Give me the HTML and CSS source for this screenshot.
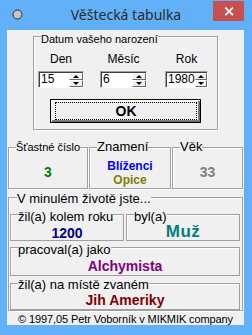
FILE: index.html
```html
<!DOCTYPE html>
<html lang="cs">
<head>
<meta charset="utf-8">
<title>Věštecká tabulka</title>
<link rel="stylesheet" href="styles.css">
</head>
<body>
<div class="window">
  <div class="titlebar">
    <div class="tb-left">
      <svg class="app-icon" width="11" height="11" viewBox="0 0 11 11"><circle cx="5.5" cy="5.5" r="4.5" fill="#c4c4c4" stroke="#2e2e2e" stroke-width="1"/></svg>
    </div>
    <div class="title">Věštecká tabulka</div>
    <div class="tb-right">
      <div class="close"><svg width="31" height="20" viewBox="0 0 31 20"><path d="M13 7.2 L19.3 13.5 M19.3 7.2 L13 13.5" stroke="#fff" stroke-width="1.8" stroke-linecap="square"/></svg></div>
    </div>
  </div>
  <div class="client">
    <div class="group date">
      <div class="cap cap-small">Datum vašeho narození</div>
      <div class="date-row">
        <div class="field f1">
          <div class="flabel">Den</div>
          <div class="spin"><span class="spin-text">15</span><span class="spin-btns"><span class="sb up"></span><span class="sb down"></span></span></div>
        </div>
        <div class="field f2">
          <div class="flabel">Měsíc</div>
          <div class="spin"><span class="spin-text">6</span><span class="spin-btns"><span class="sb up"></span><span class="sb down"></span></span></div>
        </div>
        <div class="field f3">
          <div class="flabel">Rok</div>
          <div class="spin"><span class="spin-text">1980</span><span class="spin-btns"><span class="sb up"></span><span class="sb down"></span></span></div>
        </div>
      </div>
      <div class="ok-btn"><span class="ok-focus">OK</span></div>
    </div>

    <div class="row3">
      <div class="group rbox r-lucky">
        <div class="cap cap-small">Šťastné číslo</div>
        <div class="val big green">3</div>
      </div>
      <div class="group rbox r-sign">
        <div class="cap">Znamení</div>
        <div class="val mid blue first">Blíženci</div>
        <div class="val mid olive">Opice</div>
      </div>
      <div class="group rbox r-age">
        <div class="cap">Věk</div>
        <div class="val big gray">33</div>
      </div>
    </div>

    <div class="group past">
      <div class="cap cap-past">V minulém životě jste...</div>
      <div class="irow">
        <div class="group ibox half">
          <div class="cap cap-inner">žil(a) kolem roku</div>
          <div class="val big navy pad1">1200</div>
        </div>
        <div class="group ibox half">
          <div class="cap cap-inner">byl(a)</div>
          <div class="val big teal wide">Muž</div>
        </div>
      </div>
      <div class="group ibox job">
        <div class="cap cap-inner">pracoval(a) jako</div>
        <div class="val big purple pad1">Alchymista</div>
      </div>
      <div class="group ibox place">
        <div class="cap cap-place">žil(a) na místě zvaném</div>
        <div class="val big maroon">Jih Ameriky</div>
      </div>
    </div>

    <div class="copyright">© 1997,05 Petr Voborník v MIKMIK company</div>
  </div>
</div>
</body>
</html>
```

FILE: styles.css
```css
html, body {
  margin: 0;
  padding: 0;
}
body {
  width: 252px;
  height: 335px;
  overflow: hidden;
  background: #62b0f7;
  font-family: "Liberation Sans", Arial, sans-serif;
  color: #000;
}
.window {
  width: 252px;
  height: 335px;
  background: #62b0f7;
}

/* title bar */
.titlebar {
  height: 30px;
  display: grid;
  grid-template-columns: 1fr auto 1fr;
}
.tb-left {
  display: flex;
  align-items: flex-start;
  padding: 9px 0 0 12px;
}
.app-icon { display: block; }
.title {
  font-family: "Noto Sans", "Liberation Sans", sans-serif;
  font-size: 14px;
  line-height: 30px;
  color: #2b2b2b;
  white-space: nowrap;
}
.tb-right {
  display: flex;
  justify-content: flex-end;
  align-items: flex-start;
  padding: 1px 8px 0 0;
}
.close {
  width: 31px;
  height: 20px;
  background: #c75050;
}
.close svg { display: block; }

/* client area */
.client {
  margin-left: 7px;
  width: 237px;
  height: 295px;
  box-sizing: border-box;
  padding-top: 6px;
  background: #f0f0f0;
}

.group {
  border: 1px solid #a0a0a0;
  box-sizing: border-box;
  box-shadow: inset 1px 1px 0 #fff, 1px 1px 0 #fff;
}
.cap {
  width: fit-content;
  margin-left: 7px;
  background: #f0f0f0;
  font-size: 13px;
  line-height: 14px;
  white-space: nowrap;
}
.cap-small { font-size: 11px; }

/* date group */
.date {
  margin-left: 26px;
  width: 185px;
  height: 94px;
}
.date > .cap { margin-top: -5px; }
.date-row {
  display: flex;
  padding-left: 4px;
}
.field {
  display: flex;
  flex-direction: column;
  align-items: center;
}
.f1 { width: 46px; }
.f2 { width: 47px; margin-left: 16px; }
.f3 { width: 43px; margin-left: 18px; }
.flabel {
  font-size: 12px;
  line-height: 14px;
  margin-top: 6px;
}
.spin {
  margin-top: 5px;
  width: 100%;
  height: 17px;
  box-sizing: border-box;
  display: flex;
  background: #fff;
  border: 1px solid;
  border-color: #a0a0a0 #fff #fff #a0a0a0;
  box-shadow: inset 1px 1px 0 #404040;
}
.spin-text {
  flex: 1;
  font-size: 12px;
  line-height: 15px;
  padding-left: 2px;
}
.spin-btns {
  width: 14px;
  display: flex;
  flex-direction: column;
  margin: 1px 0 0 0;
}
.sb {
  flex: 1;
  box-sizing: border-box;
  background: #f0f0f0;
  border: 1px solid;
  border-color: #fff #696969 #696969 #fff;
  display: flex;
  align-items: center;
  justify-content: center;
}
.sb::after {
  content: "";
  width: 0;
  height: 0;
  border-left: 3px solid transparent;
  border-right: 3px solid transparent;
}
.up::after { border-bottom: 3px solid #000; }
.down::after { border-top: 3px solid #000; }

.ok-btn {
  margin: 11px auto 0;
  width: 151px;
  height: 24px;
  box-sizing: border-box;
  border: 1px solid #000;
  background: #f0f0f0;
  box-shadow: inset 1px 1px 0 #fff, inset -1px -1px 0 #696969, inset -2px -2px 0 #808080;
  padding: 2px 3px 2px 4px;
  display: flex;
}
.ok-focus {
  flex: 1;
  border: 1px dotted #000;
  display: flex;
  align-items: center;
  justify-content: center;
  font-weight: bold;
  font-size: 14px;
  line-height: 16px;
}

/* three result boxes */
.row3 {
  display: flex;
  gap: 1px;
  margin: 17px 1px 0;
}
.rbox { height: 42px; }
.rbox > .cap { margin-top: -8px; }
.r-lucky { width: 80px; }
.r-sign { width: 82px; }
.r-age { width: 71px; }

.val {
  text-align: center;
  font-weight: bold;
  white-space: nowrap;
}
.big { font-size: 14px; line-height: 16px; }
.mid { font-size: 12px; line-height: 14px; }
.r-lucky .val, .r-age .val { padding-top: 10px; }
.r-sign .first { padding-top: 5px; }
.pad1 { padding-top: 1px; }
.wide { font-size: 17px; letter-spacing: 0.5px; }

.green { color: #008000; }
.blue { color: #0000ff; }
.olive { color: #808000; }
.gray { color: #808080; }
.navy { color: #000080; }
.teal { color: #008080; }
.purple { color: #800080; }
.maroon { color: #800000; }

/* past life group */
.past {
  margin: 8px 1px 0;
  height: 114px;
  padding: 0 2px 0 1px;
}
.cap-past { margin-top: -6px; }
.irow {
  display: flex;
  gap: 2px;
  margin-top: 8px;
}
.ibox { box-shadow: inset 1px 1px 0 #fff; }
.half { width: 114px; height: 27px; }
.cap-inner { margin-top: -5px; }
.cap-place { margin-top: -6px; }
.job { height: 29px; margin-top: 6px; }
.place { height: 27px; margin-top: 7px; }

.copyright {
  margin-top: 2px;
  text-align: center;
  font-size: 11px;
  line-height: 13px;
  letter-spacing: -0.1px;
  white-space: nowrap;
}
```
